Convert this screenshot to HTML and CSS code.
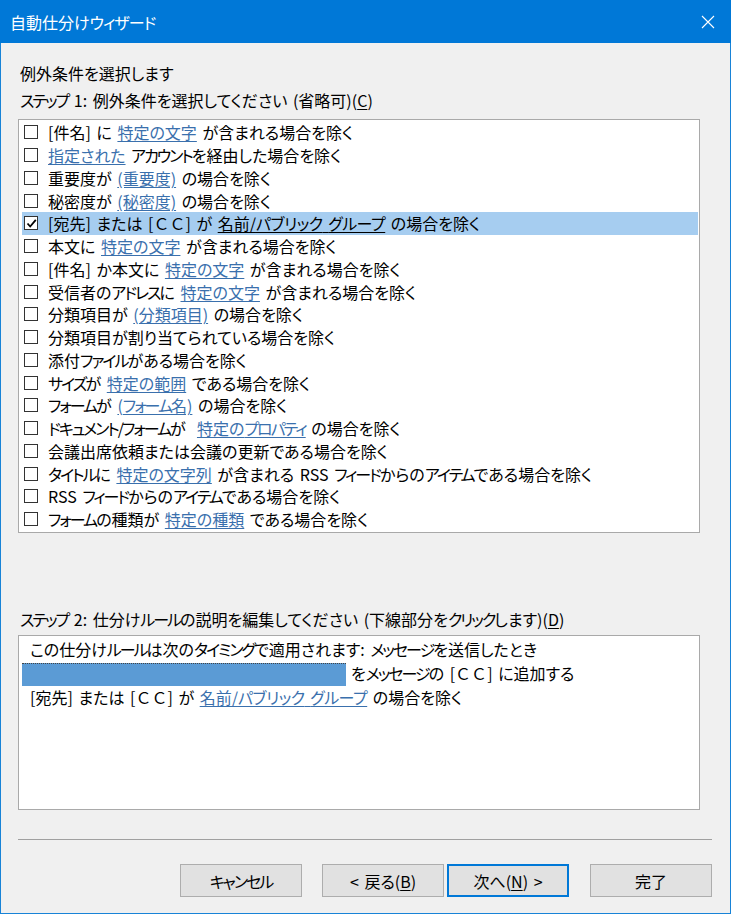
FILE: index.html
```html
<!DOCTYPE html>
<html lang="ja">
<head>
<meta charset="utf-8">
<title>自動仕分けウィザード</title>
<link rel="stylesheet" href="styles.css">
</head>
<body>
<div class="window">
  <div class="titlebar">
    <span class="title">自動仕分け<span class="k">ウィザード</span></span>
    <svg class="close" width="14" height="14" viewBox="0 0 14 14"><path d="M1 1L13 13M13 1L1 13" stroke="#fff" stroke-width="1.1" fill="none"/></svg>
  </div>
  <div class="content">
    <div class="heading">例外条件を選択します</div>
    <div class="label"><span class="k">ステップ</span> 1: 例外条件を選択してください (省略可)(<u>C</u>)</div>
    <div class="listbox">
      <div class="row"><span class="cb"></span><span class="txt">[件名] に <a>特定の文字</a> が含まれる場合を除く</span></div>
      <div class="row"><span class="cb"></span><span class="txt"><a>指定された</a> <span class="k">アカウント</span>を経由した場合を除く</span></div>
      <div class="row"><span class="cb"></span><span class="txt">重要度が <a>(重要度)</a> の場合を除く</span></div>
      <div class="row"><span class="cb"></span><span class="txt">秘密度が <a>(秘密度)</a> の場合を除く</span></div>
      <div class="row selected"><span class="cb checked"><svg width="11" height="11" viewBox="0 0 11 11"><path d="M1.5 5.5L4.2 8.5L9.8 1.8" stroke="#000" stroke-width="1.8" fill="none"/></svg></span><span class="txt">[宛先] または [<span class="fw">ＣＣ</span>] が <a>名前/<span class="k1">パブリック</span> <span class="k1">グループ</span></a> の場合を除く</span></div>
      <div class="row"><span class="cb"></span><span class="txt">本文に <a>特定の文字</a> が含まれる場合を除く</span></div>
      <div class="row"><span class="cb"></span><span class="txt">[件名] か本文に <a>特定の文字</a> が含まれる場合を除く</span></div>
      <div class="row"><span class="cb"></span><span class="txt">受信者の<span class="k">アドレス</span>に <a>特定の文字</a> が含まれる場合を除く</span></div>
      <div class="row"><span class="cb"></span><span class="txt">分類項目が <a>(分類項目)</a> の場合を除く</span></div>
      <div class="row"><span class="cb"></span><span class="txt">分類項目が割り当てられている場合を除く</span></div>
      <div class="row"><span class="cb"></span><span class="txt">添付<span class="k">ファイル</span>がある場合を除く</span></div>
      <div class="row"><span class="cb"></span><span class="txt"><span class="k">サイズ</span>が <a>特定の範囲</a> である場合を除く</span></div>
      <div class="row"><span class="cb"></span><span class="txt"><span class="k">フォーム</span>が <a>(<span class="k">フォーム</span>名)</a> の場合を除く</span></div>
      <div class="row"><span class="cb"></span><span class="txt"><span class="k">ドキュメント/フォーム</span>が&nbsp; <a>特定の<span class="k">プロパティ</span></a> の場合を除く</span></div>
      <div class="row"><span class="cb"></span><span class="txt">会議出席依頼または会議の更新である場合を除く</span></div>
      <div class="row"><span class="cb"></span><span class="txt"><span class="k">タイトル</span>に <a>特定の文字列</a> が含まれる RSS <span class="k">フィード</span>からの<span class="k">アイテム</span>である場合を除く</span></div>
      <div class="row"><span class="cb"></span><span class="txt">RSS <span class="k">フィード</span>からの<span class="k">アイテム</span>である場合を除く</span></div>
      <div class="row"><span class="cb"></span><span class="txt"><span class="k">フォーム</span>の種類が <a>特定の種類</a> である場合を除く</span></div>
    </div>
    <div class="label label2"><span class="k">ステップ</span> 2: 仕分け<span class="k">ルール</span>の説明を編集してください (下線部分を<span class="k">クリック</span>します)(<u>D</u>)</div>
    <div class="descbox">
      <div class="dline"><span>この仕分け<span class="k">ルール</span>は次の<span class="k">タイミング</span>で適用されます: <span class="k">メッセージ</span>を送信したとき</span></div>
      <div class="dline"><span class="selbar"></span><span>を<span class="k">メッセージ</span>の [<span class="fw">ＣＣ</span>] に追加する</span></div>
      <div class="dline"><span>[宛先] または [<span class="fw">ＣＣ</span>] が <a>名前/<span class="k1">パブリック</span> <span class="k1">グループ</span></a> の場合を除く</span></div>
    </div>
    <div class="sep"></div>
    <div class="buttons">
      <button class="btn btn-cancel"><span class="k">キャンセル</span></button>
      <button class="btn btn-back">&lt; 戻る(<u>B</u>)</button>
      <button class="btn btn-next">次へ(<u>N</u>) &gt;</button>
      <button class="btn">完了</button>
    </div>
  </div>
</div>
</body>
</html>
```

FILE: styles.css
```css
* { box-sizing: border-box; }
html, body { margin: 0; padding: 0; }
body {
  width: 731px;
  height: 914px;
  font-family: "Noto Sans CJK JP", "Noto Sans", sans-serif;
  font-feature-settings: "palt";
  font-size: 16px;
  word-spacing: 2px;
  color: #000;
  background: #f0f0f0;
}
.k { letter-spacing: -2px; }
.k1 { letter-spacing: -0.5px; }
.title .k { letter-spacing: -1px; }
.window {
  width: 731px;
  height: 914px;
  border: 1px solid #1883d7;
  border-top: none;
  background: #f0f0f0;
  display: flex;
  flex-direction: column;
}
.titlebar {
  height: 43px;
  background: #0078d7;
  display: flex;
  align-items: center;
  justify-content: space-between;
  padding: 0 16px 0 10px;
  margin: 0 -1px;
}
.title {
  color: #fff;
  font-size: 16px;
  line-height: 20px;
}
.close { display: block; }
.content {
  padding: 19px 18px 0 17px;
  display: flex;
  flex-direction: column;
}
.heading {
  line-height: 22px;
  padding-left: 2px;
}
.label {
  line-height: 22px;
  margin-top: 5px;
  padding-left: 2px;
}
.fw { font-feature-settings: normal; }
.listbox {
  width: 682px;
  height: 414px;
  margin-top: 8px;
  background: #fff;
  border: 1px solid #a9a9a9;
  padding: 1px 1px 0 3px;
}
.row {
  height: 22.75px;
  display: flex;
  align-items: center;
  padding-left: 2px;
  white-space: nowrap;
}
.row.selected { background: #a6cdf0; }
.cb {
  width: 14px;
  height: 14px;
  border: 1px solid #333;
  background: #fff;
  margin-right: 10px;
  display: flex;
  align-items: center;
  justify-content: center;
  flex: none;
}
.txt { line-height: 20px; }
a {
  color: #3a70ad;
  text-decoration: underline;
  text-underline-offset: 2px;
}
.row.selected a { color: #000; }
u { text-underline-offset: 2px; }
.label2 { margin-top: 75px; }
.descbox {
  width: 682px;
  height: 175px;
  margin-top: 5px;
  background: #fff;
  border: 1px solid #a9a9a9;
  padding: 1px 0 0 11px;
}
.dline {
  height: 24px;
  line-height: 24px;
  display: flex;
  align-items: center;
  white-space: nowrap;
}
.selbar {
  display: block;
  width: 324px;
  height: 23px;
  margin-left: -8px;
  margin-right: 5px;
  margin-top: 2px;
  background: #5b9bd5;
  border-top: 1px dotted #444;
  flex: none;
}
.sep {
  height: 1px;
  width: 694px;
  background: #a0a0a0;
  margin-top: 29px;
}
.buttons {
  display: flex;
  justify-content: flex-end;
  margin-top: 24px;
  width: 694px;
}
.btn {
  width: 122px;
  height: 33px;
  background: #e1e1e1;
  border: 1px solid #adadad;
  font-family: inherit;
  font-feature-settings: "palt";
  font-size: 16px;
  word-spacing: 2px;
  color: #000;
  padding: 0;
}
.btn-cancel { margin-right: 20px; }
.btn-back { margin-right: 3px; }
.btn-next { margin-right: 21px; border: 2px solid #0078d7; }
```
